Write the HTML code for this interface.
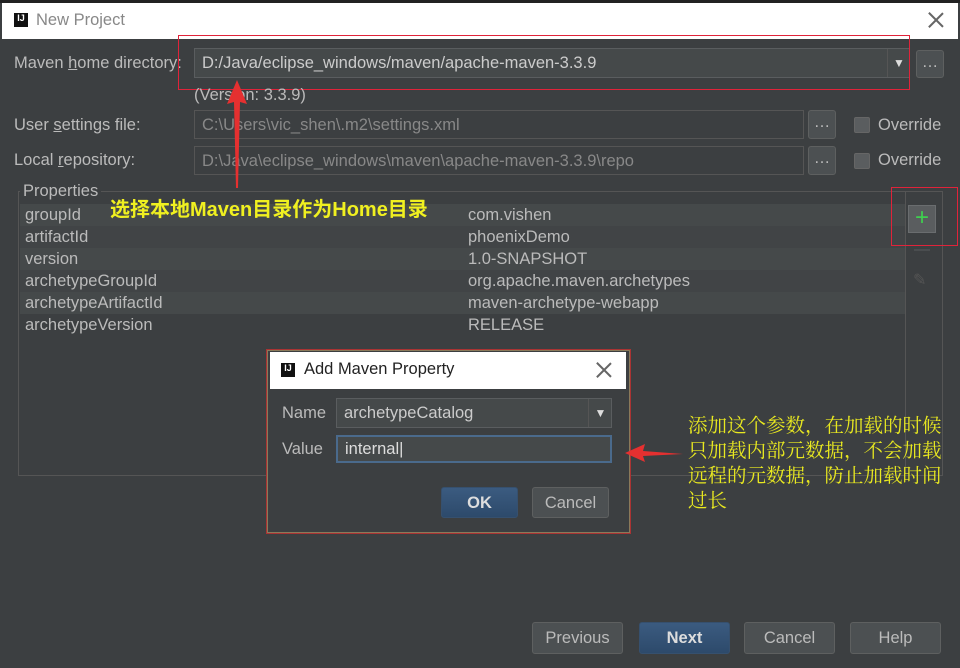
<html><head><style>
body{margin:0;width:960px;height:668px;background:#3c3f41;font-family:"Liberation Sans","Noto Sans CJK SC",sans-serif;color:#bbbbbb;font-size:16.5px;position:relative;overflow:hidden}
.a{position:absolute}
.fld{position:absolute;border:1px solid #5a5d5f;background:#45494a;box-sizing:border-box;padding-left:7px;line-height:28px;white-space:nowrap;overflow:hidden}
.dis{color:#888;background:#3c3f41;border-color:#555}
.btn{position:absolute;border:1px solid #5e6060;background:#4c5052;border-radius:3px;box-sizing:border-box;text-align:center;line-height:30px;color:#bbb}
.blue{background:linear-gradient(#3b5b80,#2d4a6b);color:#ddd;font-weight:bold;border-color:#36506e}
.row{position:absolute;left:20px;width:885px;height:22px;line-height:22px}
.row span{position:absolute;left:5px}.row b{font-weight:normal;position:absolute;left:448px}
.cb{position:absolute;width:14px;height:14px;background:#5a5d5f;border:1px solid #666;border-radius:2px}
.x{position:absolute;width:16px;height:16px}
.x:before,.x:after{content:"";position:absolute;left:7px;top:-2px;width:1.5px;height:20px;background:#666;transform:rotate(45deg)}
.x:after{transform:rotate(-45deg)}
</style></head><body>
<div class="a" style="left:0;top:0;width:960px;height:3px;background:#222"></div>
<div class="a" style="left:2px;top:3px;width:956px;height:36px;background:#fff"></div>
<div class="a" style="left:14px;top:13px;width:14px;height:14px;background:#111;color:#fff;font-size:9px;font-weight:bold;line-height:11px;text-align:center">IJ</div>
<div class="a" style="left:36px;top:11px;color:#888;font-size:16.5px">New Project</div>
<div class="x" style="left:928px;top:12px"></div>

<div class="a" style="left:14px;top:54px">Maven <u>h</u>ome directory:</div>
<div class="fld" style="left:194px;top:48px;width:716px;height:30px;color:#ccc">D:/Java/eclipse_windows/maven/apache-maven-3.3.9</div>
<div class="a" style="left:887px;top:49px;width:22px;height:28px;border-left:1px solid #555;color:#ddd;font-size:12px;text-align:center;line-height:28px">▼</div>
<div class="btn" style="left:916px;top:50px;width:28px;height:28px;line-height:22px">…</div>
<div class="a" style="left:178px;top:35px;width:732px;height:55px;border:1px solid #e0233a;box-sizing:border-box"></div>
<div class="a" style="left:194px;top:86px">(Version: 3.3.9)</div>

<div class="a" style="left:14px;top:116px">User <u>s</u>ettings file:</div>
<div class="fld dis" style="left:194px;top:110px;width:610px;height:29px">C:\Users\vic_shen\.m2\settings.xml</div>
<div class="btn" style="left:808px;top:110px;width:28px;height:29px;line-height:22px">…</div>
<div class="cb" style="left:854px;top:117px"></div><div class="a" style="left:878px;top:116px">Override</div>
<div class="a" style="left:14px;top:151px">Local <u>r</u>epository:</div>
<div class="fld dis" style="left:194px;top:146px;width:610px;height:29px">D:\Java\eclipse_windows\maven\apache-maven-3.3.9\repo</div>
<div class="btn" style="left:808px;top:146px;width:28px;height:29px;line-height:22px">…</div>
<div class="cb" style="left:854px;top:153px"></div><div class="a" style="left:878px;top:151px">Override</div>

<div class="a" style="left:18px;top:191px;width:925px;height:285px;border:1px solid #555;box-sizing:border-box"></div>
<div class="a" style="left:20px;top:182px;background:#3c3f41;padding:0 3px">Properties</div>
<div class="a" style="left:20px;top:204px;width:885px;height:270px;background:#3c3f41"></div>
<div class="row" style="top:204px;background:#45494a"><span>groupId</span><b>com.vishen</b></div>
<div class="row" style="top:226px;background:#414446"><span>artifactId</span><b>phoenixDemo</b></div>
<div class="row" style="top:248px;background:#45494a"><span>version</span><b>1.0-SNAPSHOT</b></div>
<div class="row" style="top:270px;background:#414446"><span>archetypeGroupId</span><b>org.apache.maven.archetypes</b></div>
<div class="row" style="top:292px;background:#45494a"><span>archetypeArtifactId</span><b>maven-archetype-webapp</b></div>
<div class="row" style="top:314px;background:#3c3f41"><span>archetypeVersion</span><b>RELEASE</b></div>
<div class="a" style="left:905px;top:192px;width:1px;height:282px;background:#555"></div>
<div class="a" style="left:908px;top:205px;width:28px;height:28px;background:#5a5d5f;border:1px solid #6a6d6f;box-sizing:border-box;color:#3fcf4f;font-size:24px;line-height:24px;text-align:center">+</div>
<div class="a" style="left:891px;top:187px;width:67px;height:59px;border:1px solid #e0233a;box-sizing:border-box"></div>
<div class="a" style="left:914px;top:249px;width:16px;height:2px;background:#4a4d4f"></div>
<div class="a" style="left:913px;top:270px;color:#555;font-size:16px">✎</div>

<div class="a" style="left:110px;top:193px;color:#f0f020;font-size:20px;font-weight:bold">选择本地Maven目录作为Home目录</div>
<svg class="a" style="left:225px;top:80px" width="24" height="110"><polygon points="12,0 2,24 9,22 11,108 13,108 15,22 22,24" fill="#e53030"/></svg>

<div class="a" style="left:267px;top:350px;width:361px;height:181px;background:#3c3f41;border:1px solid #8a7a5a;box-shadow:0 0 0 1px #a33"></div>
<div class="a" style="left:270px;top:352px;width:356px;height:37px;background:#fff"></div>
<div class="a" style="left:281px;top:363px;width:14px;height:14px;background:#111;color:#fff;font-size:9px;font-weight:bold;line-height:11px;text-align:center">IJ</div>
<div class="a" style="left:304px;top:360px;color:#222;font-size:16.5px">Add Maven Property</div>
<div class="x" style="left:596px;top:362px"></div>
<div class="a" style="left:282px;top:404px">Name</div>
<div class="fld" style="left:336px;top:398px;width:276px;height:30px;color:#ccc">archetypeCatalog</div>
<div class="a" style="left:588px;top:399px;width:23px;height:28px;border-left:1px solid #555;color:#ddd;font-size:12px;text-align:center;line-height:28px">▼</div>
<div class="a" style="left:282px;top:440px">Value</div>
<div class="fld" style="left:336px;top:435px;width:276px;height:28px;border:2px solid #4a6a8c;color:#ddd;line-height:24px">internal|</div>
<div class="btn blue" style="left:441px;top:487px;width:77px;height:31px">OK</div>
<div class="btn" style="left:532px;top:487px;width:77px;height:31px">Cancel</div>

<svg class="a" style="left:625px;top:444px" width="60" height="18"><polygon points="0,9 20,0 18,7 58,10 18,12 20,18" fill="#e53030"/></svg>
<div class="a" style="left:688px;top:412px;width:262px;color:#e8e820;font-size:19.5px;line-height:25px;font-family:'Noto Serif CJK SC',serif">添加这个参数，在加载的时候只加载内部元数据，不会加载远程的元数据，防止加载时间过长</div>

<div class="btn" style="left:532px;top:622px;width:91px;height:32px">Previous</div>
<div class="btn blue" style="left:639px;top:622px;width:91px;height:32px">Next</div>
<div class="btn" style="left:744px;top:622px;width:91px;height:32px">Cancel</div>
<div class="btn" style="left:850px;top:622px;width:91px;height:32px">Help</div>
</body></html>
